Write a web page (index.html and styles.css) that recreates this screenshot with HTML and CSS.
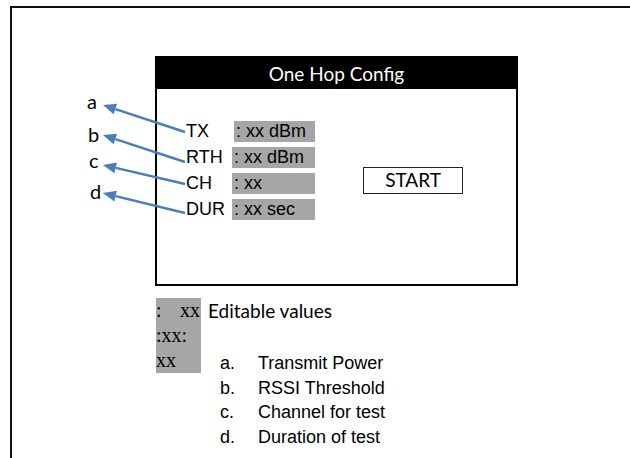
FILE: index.html
```html
<!DOCTYPE html>
<html>
<head>
<meta charset="utf-8">
<link rel="stylesheet" href="styles.css">
</head>
<body>
<div class="frame">
  <section class="panel">
    <header class="panel-title">One Hop Config</header>
    <div class="panel-body">
      <div class="fields">
        <span class="lbl">TX</span><span class="val val-tx">: xx dBm</span>
        <span class="lbl">RTH</span><span class="val">: xx dBm</span>
        <span class="lbl">CH</span><span class="val">: xx</span>
        <span class="lbl">DUR</span><span class="val">: xx sec</span>
      </div>
      <div class="start">START</div>
    </div>
  </section>
  <div class="legend">
    <div class="swatch">
      <div class="sw-line sw-split"><span>:</span><span>xx</span></div>
      <div class="sw-line">:xx:</div>
      <div class="sw-line">xx</div>
    </div>
    <div class="legend-text">
      <div class="editable">Editable values</div>
      <ul class="items">
        <li><span class="mk">a.</span><span>Transmit Power</span></li>
        <li><span class="mk">b.</span><span>RSSI Threshold</span></li>
        <li><span class="mk">c.</span><span>Channel for test</span></li>
        <li><span class="mk">d.</span><span>Duration of test</span></li>
      </ul>
    </div>
  </div>
</div>
<svg class="callouts" width="630" height="458" viewBox="0 0 630 458">
  <g class="arrows">
    <line x1="185" y1="132" x2="115.4" y2="109.1"/>
    <polygon points="103,105 117.1,103.8 113.6,114.3"/>
    <line x1="185" y1="162" x2="115.4" y2="139.1"/>
    <polygon points="103,135 117.1,133.8 113.6,144.3"/>
    <line x1="185" y1="184" x2="115.7" y2="167.9"/>
    <polygon points="103,165 116.9,162.6 114.4,173.3"/>
    <line x1="185" y1="213" x2="115.6" y2="196.1"/>
    <polygon points="103,193 116.9,190.7 114.3,201.4"/>
  </g>
  <g class="letters">
    <text x="87" y="109">a</text>
    <text x="88" y="142">b</text>
    <text x="89" y="168">c</text>
    <text x="90" y="199">d</text>
  </g>
</svg>
</body>
</html>
```
FILE: styles.css
```css
html, body {
  margin: 0;
  padding: 0;
  background: #fff;
  overflow: hidden;
}
body {
  width: 630px;
  height: 458px;
  position: relative;
  padding: 6px 0 0 10px;
  box-sizing: border-box;
}
.frame {
  border-top: 2px solid #111;
  border-left: 2px solid #111;
  width: 620px;
  height: 452px;
  box-sizing: border-box;
}
.panel {
  margin: 48px 0 0 143px;
  width: 363px;
  height: 230px;
  box-sizing: border-box;
  border: 2px solid #000;
  display: flex;
  flex-direction: column;
}
.panel-title {
  background: #000;
  color: #fff;
  height: 31px;
  line-height: 31px;
  text-align: center;
  font-family: Lato, "Open Sans", sans-serif;
  font-size: 19px;
}
.panel-body {
  display: flex;
  align-items: flex-start;
  padding: 32px 0 0 29px;
}
.fields {
  display: grid;
  grid-template-columns: 46px 83px;
  grid-auto-rows: 21px;
  row-gap: 5px;
  font-family: "Liberation Sans", Arial, sans-serif;
  font-size: 18px;
  line-height: 21px;
  color: #000;
}
.lbl {
  white-space: nowrap;
}
.val {
  background: #a6a6a6;
  padding-left: 2px;
  white-space: nowrap;
}
.val-tx {
  margin-left: 2px;
}
.start {
  margin: 46px 0 0 48px;
  width: 100px;
  height: 27px;
  box-sizing: border-box;
  border: 1.5px solid #222;
  text-align: center;
  line-height: 24px;
  font-family: Lato, "Open Sans", sans-serif;
  font-size: 19px;
}
.legend {
  display: flex;
  align-items: flex-start;
  margin: 12px 0 0 144px;
}
.swatch {
  background: #a6a6a6;
  width: 45px;
  height: 75px;
  font-family: "Liberation Serif", "Times New Roman", serif;
  font-size: 20px;
  line-height: 25px;
  color: #000;
}
.sw-line {
  height: 25px;
  white-space: nowrap;
}
.sw-split {
  display: flex;
  justify-content: space-between;
  padding-right: 1px;
}
.legend-text {
  margin-left: 7px;
}
.editable {
  font-family: Lato, "Open Sans", sans-serif;
  font-size: 19px;
  line-height: 25px;
}
.items {
  list-style: none;
  margin: 28px 0 0 12px;
  padding: 0;
  font-family: "Liberation Sans", Arial, sans-serif;
  font-size: 18px;
  line-height: 24.5px;
}
.items li {
  display: flex;
}
.mk {
  width: 38px;
}
.callouts {
  position: absolute;
  left: 0;
  top: 0;
  pointer-events: none;
}
.arrows line {
  stroke: #4a7ebb;
  stroke-width: 2.5;
}
.arrows polygon {
  fill: #4a7ebb;
}
.letters text {
  font-family: Lato, "Open Sans", sans-serif;
  font-size: 20px;
  fill: #000;
}
```
